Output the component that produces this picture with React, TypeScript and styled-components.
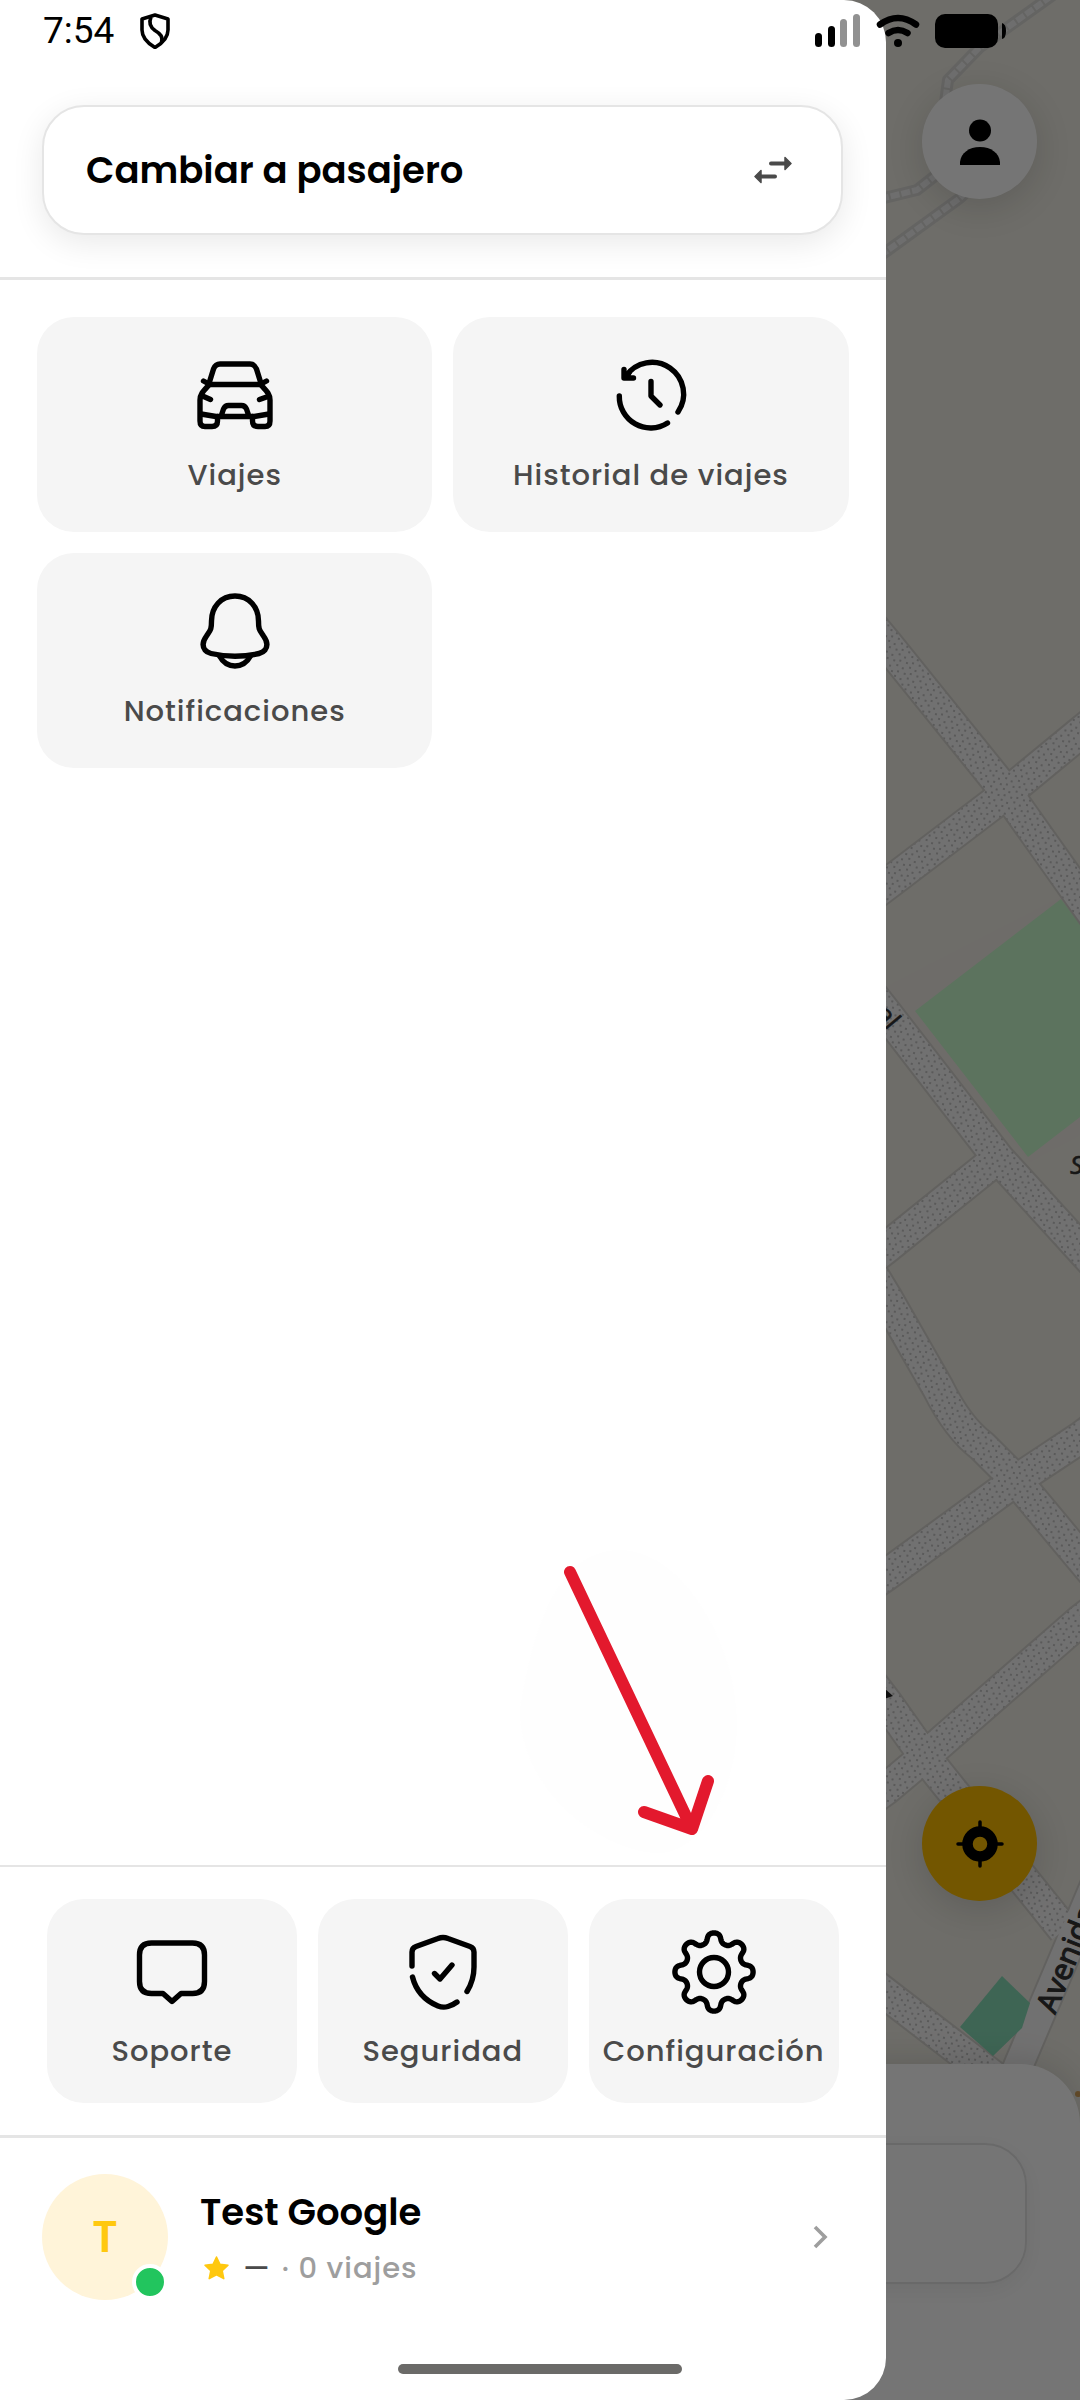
import React from "react";
import styled, { createGlobalStyle } from "styled-components";

const GlobalStyle = createGlobalStyle`
  *, *::before, *::after { box-sizing: border-box; }
  html, body, #root { height: 100%; }
  body { margin: 0; background: #6e6d69; font-family: Poppins, Inter, "Noto Sans", sans-serif; }
  button { font: inherit; color: inherit; border: 0; background: none; padding: 0; margin: 0; cursor: pointer; }
  svg { display: block; flex: none; }
`;

const Screen = styled.div`
  position: relative;
  min-height: 100vh;
  overflow: hidden;
  display: flex;
  flex-direction: column;
`;

/* ---------- Map screen behind the drawer ---------- */
const MapCanvas = styled.svg`
  position: absolute;
  inset: 0;
  width: 100%;
  height: 100%;
`;

const MapControls = styled.div`
  position: relative;
  flex: 1;
  display: flex;
  flex-direction: column;
  justify-content: space-between;
  align-items: flex-end;
  padding: 84px 43px 163px;
`;

const RoundButton = styled.button<{ $tone: string }>`
  width: 115px;
  height: 115px;
  border-radius: 50%;
  background: ${(p) => p.$tone};
  display: grid;
  place-items: center;
  box-shadow: 0 8px 36px rgba(0, 0, 0, 0.14);
`;

const Sheet = styled.section`
  position: relative;
  height: 336px;
  padding: 79px 53px;
  background: #fff;
  border-radius: 60px 60px 0 0;
  box-shadow: 0 -4px 32px rgba(0, 0, 0, 0.12);
`;

const SheetCard = styled.div`
  height: 141px;
  border: 2px solid #e5e5e5;
  border-radius: 42px;
  box-shadow: 0 6px 24px rgba(0, 0, 0, 0.06);
`;

const Scrim = styled.div`
  position: absolute;
  inset: 0;
  background: rgba(0, 0, 0, 0.54);
`;

/* ---------- Drawer ---------- */
const Drawer = styled.aside`
  position: absolute;
  top: 0;
  bottom: 0;
  left: 0;
  width: 82%;
  background: #fff;
  border-radius: 0 42px 42px 0;
  overflow: hidden;
  display: flex;
  flex-direction: column;
`;

const DrawerHeader = styled.header`
  padding: 105px 43px 42px 42px;
  border-bottom: 3px solid #e5e5e5;
`;

const SwitchButton = styled.button`
  width: 100%;
  height: 130px;
  padding: 0 49px 0 42px;
  display: flex;
  align-items: center;
  justify-content: space-between;
  border: 2px solid #e5e5e5;
  border-radius: 42px;
  background: #fff;
  box-shadow: 0 8px 32px rgba(0, 0, 0, 0.09);
  font-size: 37px;
  line-height: 54px;
  font-weight: 600;
  color: #000;
`;

const MainGrid = styled.nav`
  flex: 1;
  padding: 37px;
  display: grid;
  grid-template-columns: 1fr 1fr;
  align-content: start;
  gap: 21px;
`;

const FooterGrid = styled.nav`
  padding: 32px 47px;
  display: grid;
  grid-template-columns: repeat(3, minmax(0, 1fr));
  gap: 21px;
  border-top: 2px solid #e5e5e5;
  border-bottom: 3px solid #e5e5e5;
`;

const Tile = styled.button<{ $compact?: boolean }>`
  display: flex;
  flex-direction: column;
  align-items: center;
  gap: 16px;
  padding: ${(p) => (p.$compact ? "31px 0 30px" : "37px 0 35px")};
  border-radius: 37px;
  background: #f5f5f5;
  font-size: 29px;
  line-height: 43px;
  font-weight: 500;
  letter-spacing: 1px;
  color: #4a4a4a;
  white-space: nowrap;
`;

const Profile = styled.button`
  height: 262px;
  padding: 37px 57px 101px 42px;
  display: flex;
  align-items: center;
  gap: 32px;
  text-align: left;
`;

const Avatar = styled.span`
  position: relative;
  flex: none;
  width: 126px;
  height: 126px;
  border-radius: 50%;
  display: grid;
  place-items: center;
  background: #fff4d9;
  color: #ffc80f;
  font-size: 44px;
  line-height: 60px;
  font-weight: 600;
`;

const OnlineDot = styled.span`
  position: absolute;
  right: 0;
  bottom: 0;
  width: 36px;
  height: 36px;
  border: 4px solid #fff;
  border-radius: 50%;
  background: #22c55e;
`;

const ProfileText = styled.span`
  flex: 1;
  display: flex;
  flex-direction: column;
  gap: 8px;
`;

const ProfileName = styled.span`
  font-size: 37px;
  line-height: 54px;
  font-weight: 600;
  color: #000;
`;

const ProfileMeta = styled.span`
  display: flex;
  align-items: center;
  gap: 11px;
  font-size: 29px;
  line-height: 43px;
  font-weight: 500;
  letter-spacing: 1px;
  color: #9e9e9e;
`;

const Rating = styled.span`
  display: flex;
  align-items: center;
  gap: 11px;
  color: #4a4a4a;
`;

/* ---------- System chrome ---------- */
const StatusBar = styled.div`
  position: absolute;
  top: 0;
  left: 0;
  right: 0;
  height: 62px;
  padding: 0 74px 0 43px;
  display: flex;
  align-items: center;
  justify-content: space-between;
  font-family: Roboto, sans-serif;
  font-size: 37px;
  line-height: 42px;
  color: #000;
`;

const StatusGroup = styled.div<{ $gap: number }>`
  display: flex;
  align-items: center;
  gap: ${(p) => p.$gap}px;
`;

const HomeIndicator = styled.div`
  position: absolute;
  bottom: 26px;
  left: 50%;
  width: 284px;
  height: 10px;
  margin-left: -142px;
  border-radius: 5px;
  background: #6b6a68;
`;

const Annotation = styled.svg`
  position: absolute;
  left: 518px;
  bottom: 540px;
`;

/* ---------- Icons ---------- */
type LineIconProps = { children: React.ReactNode };
const LineIcon = ({ children }: LineIconProps) => (
  <svg width="84" height="84" viewBox="0 0 84 84" fill="none" stroke="#000" strokeWidth="5.400" strokeLinecap="round" strokeLinejoin="round" aria-hidden="true">
    {children}
  </svg>
);

const CarIcon = () => (
  <LineIcon>
    <path d="M16 29.500 20.500 15Q22.500 10 27 10H57Q61.500 10 63.500 15L68 29.500" />
    <path d="M16 30.500H68M10.500 27 16 30M73.500 27 68 30" />
    <path d="M16 31C10.500 37 7 40 7 46V67Q7 72.500 12 72.500H19Q24.500 72.500 24.500 67V62.500" />
    <path d="M68 31C73.500 37 77 40 77 46V67Q77 72.500 72 72.500H65Q59.500 72.500 59.500 67V62.500" />
    <path d="M8 60 23 62.500H61L76 60M28.500 61 30.500 55Q32 51.500 35.500 51.500H48.500Q52 51.500 53.500 55L55.500 61" />
    <path d="M9.500 42 17.500 45.500M75 42.500 66.500 45.500" />
  </LineIcon>
);

const HistoryIcon = () => (
  <LineIcon>
    <path d="M17 22A31.300 31.300 0 0 1 69 58M58.500 69A31.300 31.300 0 0 1 10.300 42" />
    <path d="M15 15.500V24H24.500M15.500 23.500 20 19" />
    <path d="M42 27.500V42L51 51" />
  </LineIcon>
);

const BellIcon = () => (
  <LineIcon>
    <path d="M42 6C28 6 18.500 17 18.500 31C18.500 40 17.500 40 13.500 46C9.500 51.500 9 56 12 60Q14 62.500 18 63.500Q42 69 66 63.500Q70 62.500 72 60C75 56 74.500 51.500 70.500 46C66.500 40 65.500 40 65.500 31C65.500 17 56 6 42 6Z" />
    <path d="M26.500 66Q32 76 42 76T57.500 66" />
  </LineIcon>
);

const ChatIcon = () => (
  <LineIcon>
    <path d="M21.500 13H62.500Q74.500 13 74.500 25V51.500Q74.500 63.500 62.500 63.500H51L42 71.500 33 63.500H21.500Q9.500 63.500 9.500 51.500V25Q9.500 13 21.500 13Z" />
  </LineIcon>
);

const ShieldIcon = () => (
  <LineIcon>
    <path d="M11 36V22Q11 18 15 16.500L37 8.500Q42 6.500 47 8.500L69 16.500Q73 18 73 22V37Q73 50 66 61.500" />
    <path d="M11.500 47C15 61 25 71 37 76Q42 78 47 76.500Q52 75 56 72" />
    <path d="M33.500 43.500 39 49 51 35" />
  </LineIcon>
);

const gearPath = (() => {
  const points: string[] = [];
  for (let i = 0; i <= 240; i += 1) {
    const angle = (i / 240) * Math.PI * 2;
    const radius = 34.2 + 4.9 * Math.cos(8 * angle);
    const bend = angle + 0.032 * Math.sin(16 * angle);
    points.push(`${(42 + radius * Math.sin(bend)).toFixed(2)} ${(42 - radius * Math.cos(bend)).toFixed(2)}`);
  }
  return `M${points.join("L")}Z`;
})();

const GearIcon = () => (
  <LineIcon>
    <path d={gearPath} />
    <circle cx="42" cy="42" r="14.500" />
  </LineIcon>
);

const SwapIcon = () => (
  <svg width="38" height="28" viewBox="0 0 38 28" fill="#4a4a4a" stroke="#4a4a4a" strokeLinejoin="round" strokeLinecap="round" aria-hidden="true">
    <path d="M17 7.500H31M21 20.500H7" strokeWidth="4" />
    <path d="M31 1.500 37 7.500 31 13.500ZM7 14.500 1 20.500 7 26.500Z" strokeWidth="1.500" />
  </svg>
);

const ChevronIcon = () => (
  <svg width="18" height="26" viewBox="0 0 18 26" fill="none" stroke="#9e9e9e" strokeWidth="3.600" aria-hidden="true">
    <path d="M4 3 14 13 4 23" />
  </svg>
);

const StarIcon = () => (
  <svg width="32" height="32" viewBox="0 0 32 32" fill="#ffc80f" stroke="#ffc80f" strokeWidth="1.500" strokeLinejoin="round" aria-hidden="true">
    <path d="M16.500 5 20 12.300 28 13.200 22.200 18.700 23.800 26.700 16.500 22.800 9.200 26.700 10.800 18.700 5 13.200 13 12.300Z" />
  </svg>
);

const BadgeIcon = () => (
  <svg width="30" height="36" viewBox="0 0 30 36" fill="none" stroke="#000" strokeWidth="3.600" strokeLinejoin="round" aria-hidden="true">
    <path d="M15 2 28 6V17Q28 27 15 34.500Q2 27 2 17V6Z" />
    <path d="M11 4C8.500 10 10 14 15 17.500C21 21 23 24 21.500 29.500" />
  </svg>
);

const SignalIcon = () => (
  <svg width="46" height="34" viewBox="0 0 46 34" aria-hidden="true">
    <rect x="0" y="19" width="7" height="14" rx="3.500" />
    <rect x="13" y="12" width="7" height="21" rx="3.500" />
    <rect x="25" y="5" width="7" height="28" rx="3.500" fill="#919191" />
    <rect x="38" y="0" width="7" height="33" rx="3.500" fill="#919191" />
  </svg>
);

const WifiIcon = () => (
  <svg width="44" height="34" viewBox="0 0 44 34" fill="none" stroke="#000" strokeWidth="6.500" strokeLinecap="round" aria-hidden="true">
    <path d="M4 10.500Q22 -2.500 40 10.500M12.500 19Q22 13 31.500 19" />
    <circle cx="22" cy="29" r="4" fill="#000" stroke="none" />
  </svg>
);

const BatteryIcon = () => (
  <svg width="71" height="34" viewBox="0 0 71 34" aria-hidden="true">
    <rect width="63" height="34" rx="10" />
    <path d="M67 9Q71 10 71 17T67 25Z" />
  </svg>
);

const PersonIcon = () => (
  <svg width="40" height="46" viewBox="0 0 40 46" aria-hidden="true">
    <circle cx="20" cy="11.500" r="11" />
    <path d="M0 46V43C1 34 9 28 20 28S39 34 40 43V46Z" />
  </svg>
);

const LocateIcon = () => (
  <svg width="48" height="48" viewBox="0 0 48 48" fill="none" stroke="#000" aria-hidden="true">
    <circle cx="24" cy="24" r="12.500" strokeWidth="10.500" />
    <path d="M24 2V9M24 39V46M2 24H9M39 24H46" strokeWidth="3.500" strokeLinecap="round" />
  </svg>
);

const streets = [
  "M860 612 886 643 1007 793 1080 896 1120 952",
  "M850 912 886 885 1007 793 1080 733 1120 700",
  "M860 980 886 1013 998 1158 1080 1248 1120 1292",
  "M850 1276 886 1248 998 1158",
  "M866 1264 886 1297 938 1388Q958 1428 982 1446L1016 1480 1080 1557 1120 1604",
  "M850 1600 886 1575 1012 1483 1080 1438 1120 1408",
  "M850 1815 886 1789 923 1758 1080 1621 1120 1590",
  "M850 1655 886 1702 925 1757 1064 1930",
  "M850 1966 886 1994 1003 2084",
];
const paths = [
  "M1060 -10 1043 2 979 48 948 80 944 110",
  "M880 199 917 190 940 172 990 130",
  "M880 256 960 198 1000 160",
];
const avenue = "M1000 2112 1019 2064 1095 1885";

const CityMap = () => (
  <MapCanvas viewBox="0 0 1080 2400" preserveAspectRatio="xMaxYMin slice" aria-hidden="true">
    <defs>
      <pattern id="paving" width="13" height="11" patternUnits="userSpaceOnUse" patternTransform="rotate(12)">
        <rect width="13" height="11" fill="#f7f6f6" />
        <g fill="#c4c4c4">
          <rect x="1" y="1" width="2" height="2" />
          <rect x="7" y="3" width="2" height="2" />
          <rect x="3" y="7" width="2" height="2" />
          <rect x="10" y="8" width="2" height="2" />
        </g>
      </pattern>
    </defs>
    <rect width="1080" height="2400" fill="#efede4" />
    <path d="M880 990 1061 897 1080 924V1135L1030 1162Z" fill="#f0ebe5" />
    <path d="M915 1011 1061 899 1080 924V1117L1028 1157Z" fill="#c8facc" />
    <g fill="none" strokeLinejoin="round">
      {paths.map((d) => <path key={d} d={d} stroke="#dad9d6" strokeWidth="12" />)}
      {paths.map((d) => <path key={d} d={d} stroke="#f0f0f0" strokeWidth="6" strokeDasharray="9 2" />)}
      {streets.map((d) => <path key={d} d={d} stroke="#d6d4cf" strokeWidth="34" />)}
      <path d={avenue} stroke="#d6d4cf" strokeWidth="32" />
      {streets.map((d) => <path key={d} d={d} stroke="url(#paving)" strokeWidth="30" />)}
      <path d={avenue} stroke="#f7f6f6" strokeWidth="28" />
    </g>
    <path d="M960 2027 1002 1976 1030 2003 1022 2028 993 2056Z" fill="#88dcb8" />
    <circle cx="1078" cy="2094" r="3" fill="#d9a55c" />
    <g fill="#333" stroke="#333" fontFamily="Noto Sans, sans-serif" fontSize="30">
      <text transform="translate(1055 2015) rotate(-68)" strokeWidth="1">Avenida</text>
      <text transform="translate(888 1031) rotate(50)" textAnchor="end" strokeWidth="0.500" fontSize="26">al</text>
      <text x="1070" y="1174" strokeWidth="0.500" fontStyle="italic" fontSize="26">S</text>
    </g>
    <path d="M884 1688 893 1696 884 1699Z" fill="#222" />
  </MapCanvas>
);

type Item = { label: string; icon: React.ReactNode };
const mainItems: Item[] = [
  { label: "Viajes", icon: <CarIcon /> },
  { label: "Historial de viajes", icon: <HistoryIcon /> },
  { label: "Notificaciones", icon: <BellIcon /> },
];
const footerItems: Item[] = [
  { label: "Soporte", icon: <ChatIcon /> },
  { label: "Seguridad", icon: <ShieldIcon /> },
  { label: "Configuración", icon: <GearIcon /> },
];

export default function App() {
  return (
    <Screen>
      <GlobalStyle />
      <CityMap />
      <MapControls>
        <RoundButton type="button" $tone="#fff" aria-label="Perfil"><PersonIcon /></RoundButton>
        <RoundButton type="button" $tone="#fabb00" aria-label="Mi ubicación"><LocateIcon /></RoundButton>
      </MapControls>
      <Sheet><SheetCard /></Sheet>
      <Scrim />

      <Drawer>
        <DrawerHeader>
          <SwitchButton type="button">
            Cambiar a pasajero
            <SwapIcon />
          </SwitchButton>
        </DrawerHeader>
        <MainGrid>
          {mainItems.map((item) => (
            <Tile key={item.label} type="button">{item.icon}{item.label}</Tile>
          ))}
        </MainGrid>
        <FooterGrid>
          {footerItems.map((item) => (
            <Tile key={item.label} type="button" $compact>{item.icon}{item.label}</Tile>
          ))}
        </FooterGrid>
        <Profile type="button">
          <Avatar>T<OnlineDot /></Avatar>
          <ProfileText>
            <ProfileName>Test Google</ProfileName>
            <ProfileMeta>
              <Rating><StarIcon />—</Rating>
              <span>· 0 viajes</span>
            </ProfileMeta>
          </ProfileText>
          <ChevronIcon />
        </Profile>
      </Drawer>

      <Annotation width="222" height="312" viewBox="518 1548 222 312" fill="none" aria-hidden="true">
        <path d="M620 1550C680 1550 735 1640 737 1720C738 1790 700 1856 655 1853C600 1850 520 1790 520 1710C530 1650 550 1550 620 1550Z" fill="#fefefe" />
        <path d="M570 1572 692 1829M644 1812 692 1829 708 1781" stroke="#e3192d" strokeWidth="12" strokeLinecap="round" strokeLinejoin="round" />
      </Annotation>

      <StatusBar>
        <StatusGroup $gap={26}>7:54<BadgeIcon /></StatusGroup>
        <StatusGroup $gap={15}><SignalIcon /><WifiIcon /><BatteryIcon /></StatusGroup>
      </StatusBar>
      <HomeIndicator />
    </Screen>
  );
}
